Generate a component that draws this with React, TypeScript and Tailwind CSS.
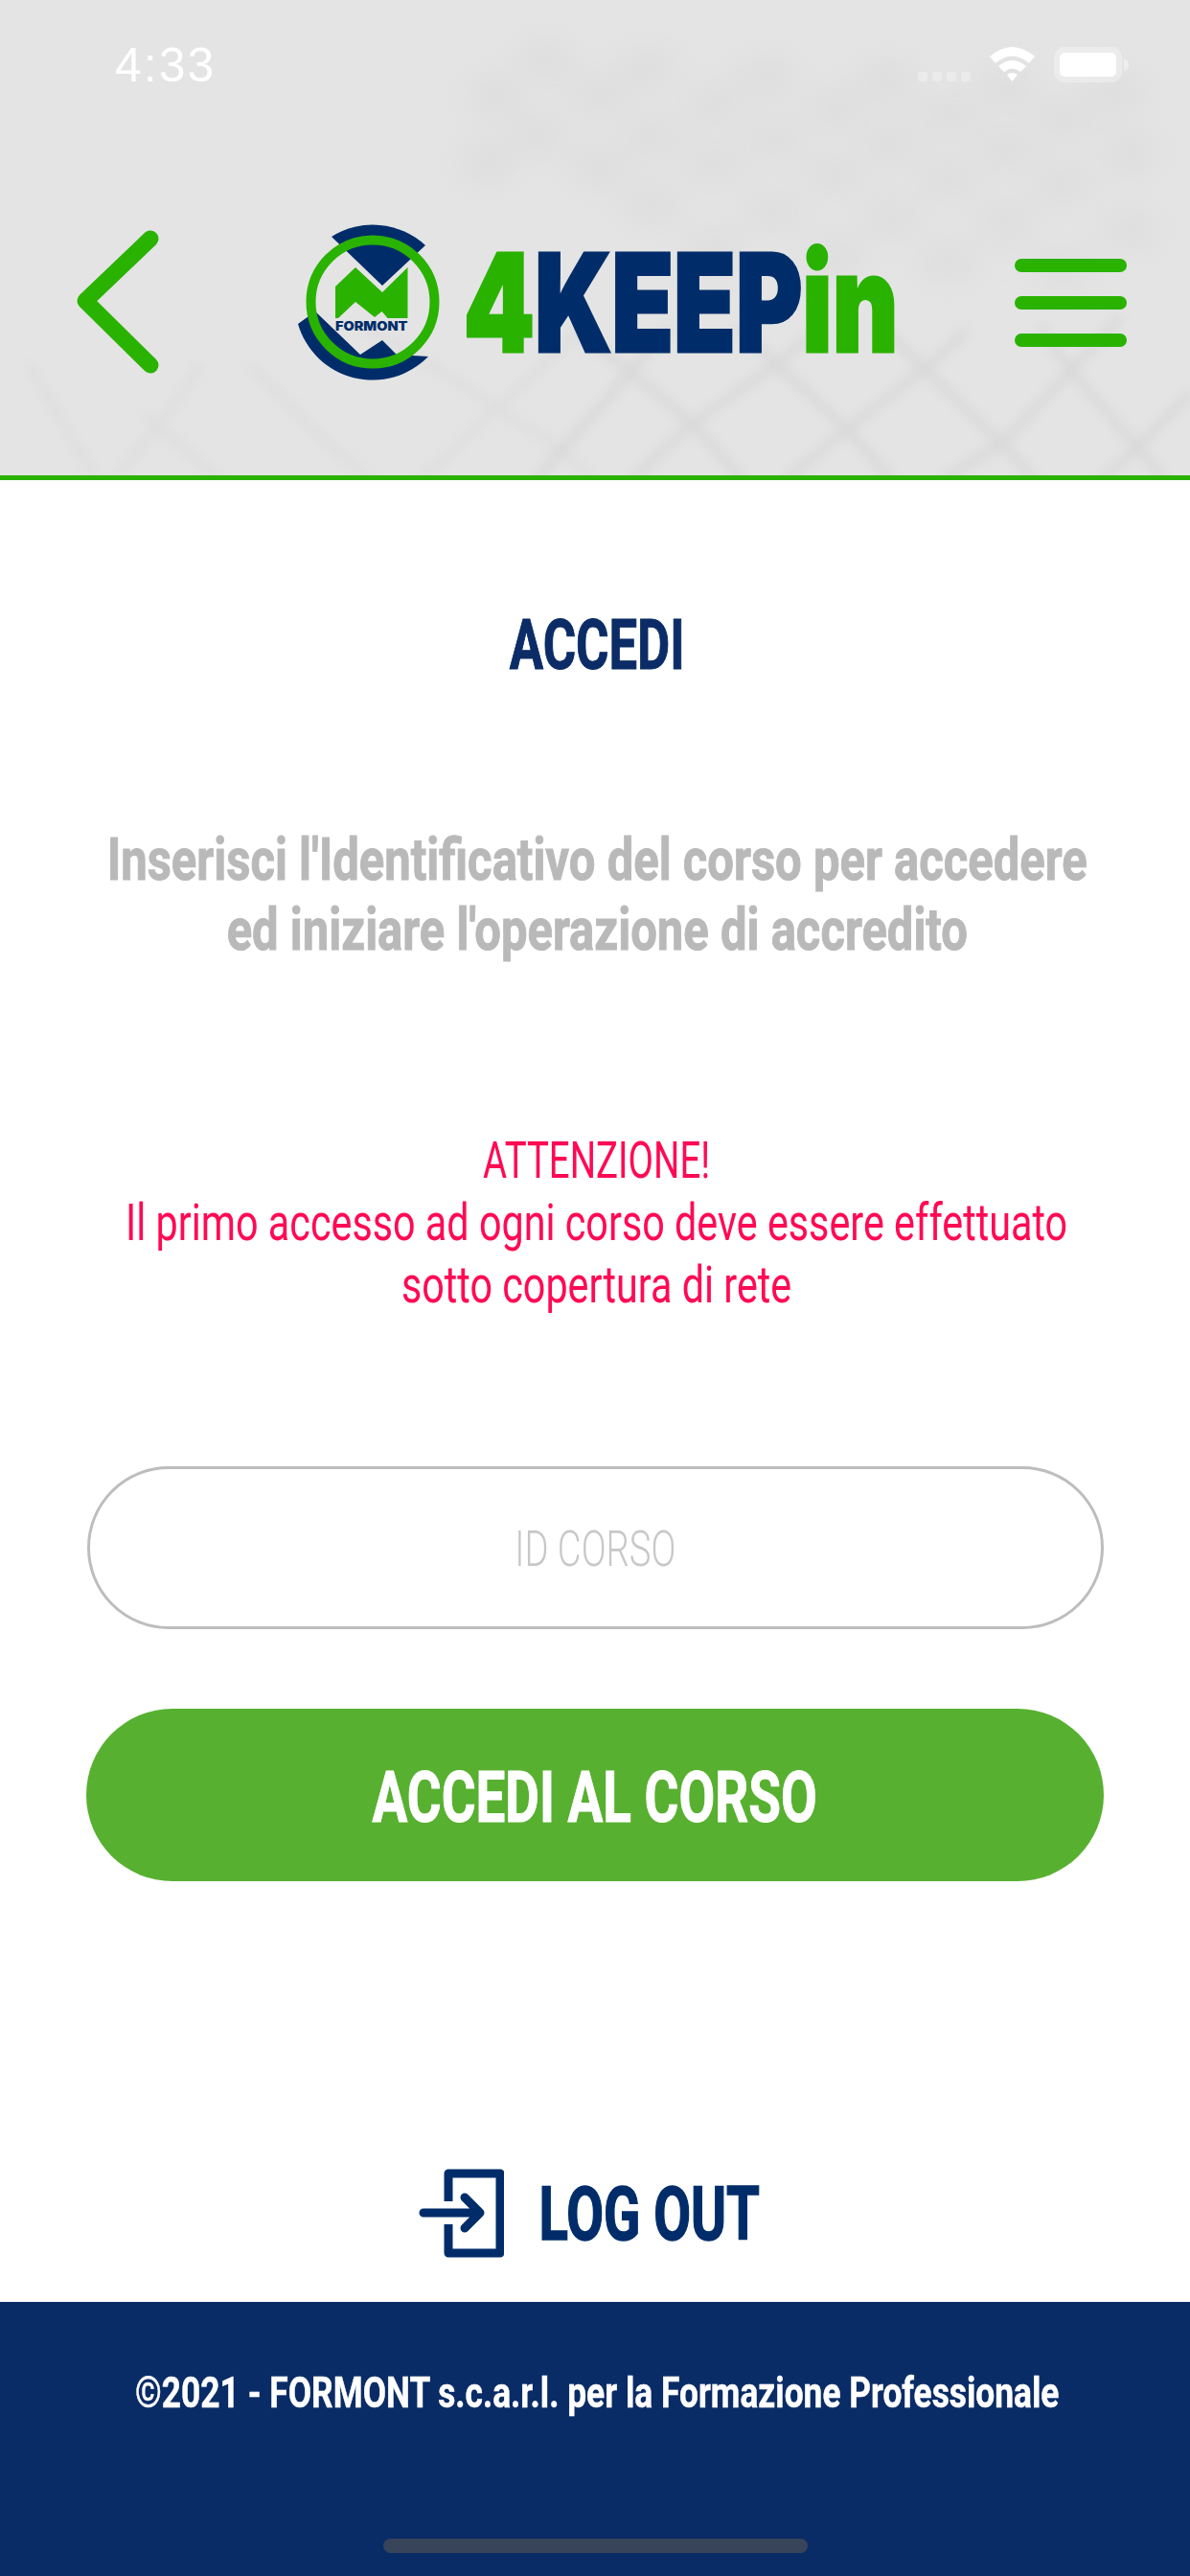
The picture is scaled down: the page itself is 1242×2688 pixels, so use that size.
import React from 'react';

const green = '#2ab200';

// blurred net behind the header, points read off the reference
const netLines = [
  'M600 345 L658 388 L723 442 L775 500',
  'M770 340 L810 380 L884 448 L930 500',
  'M920 340 L965 385 L1045 463 L1080 500',
  'M1085 340 L1118 387 L1187 467 L1215 500',
  'M660 500 L723 442 L810 380 L860 340',
  'M820 500 L884 448 L965 385 L1010 345',
  'M985 500 L1045 463 L1118 387 L1170 330',
  'M1150 500 L1187 467 L1242 410',
  'M560 500 L658 388 L700 340',
];
const faintLines = [
  'M380 340 L472 395 L575 462 L620 500',
  'M260 380 L341 462 L387 500',
  'M440 500 L520 425 L600 350',
  'M30 380 L55 423 L100 500',
  'M210 380 L182 423 L120 500',
  'M150 430 L202 477 L230 500',
];
const blobs = [
  [570, 63], [677, 70], [800, 80], [925, 84], [1050, 92], [1165, 96],
  [515, 100], [626, 100], [745, 110], [871, 113], [990, 120], [1110, 124],
  [562, 140], [681, 143], [808, 146], [930, 150], [1050, 156], [1180, 160],
  [507, 170], [626, 175], [745, 173], [871, 182], [990, 188], [1110, 192],
  [680, 215], [808, 222], [930, 228], [1050, 232], [1180, 240],
  [745, 260], [871, 268], [990, 274], [1110, 280],
];

function HeaderTexture() {
  return (
    <svg className="absolute inset-0 h-full w-full" viewBox="0 0 1242 496" preserveAspectRatio="none">
      <defs>
        <filter id="soft" x="-10%" y="-10%" width="120%" height="120%">
          <feGaussianBlur stdDeviation="6" />
        </filter>
        <filter id="softer" x="-20%" y="-20%" width="140%" height="140%">
          <feGaussianBlur stdDeviation="18" />
        </filter>
      </defs>
      <g filter="url(#softer)" fill="#cfcfcf" opacity="0.4">
        {blobs.map(([cx, cy]) => (
          <ellipse key={`${cx}-${cy}`} cx={cx} cy={cy} rx="30" ry="16" />
        ))}
      </g>
      <g filter="url(#soft)" stroke="#c6c6c6" strokeWidth="8" fill="none" opacity="0.42">
        {netLines.map((d) => (
          <path key={d} d={d} />
        ))}
      </g>
      <g filter="url(#soft)" stroke="#cccccc" strokeWidth="8" fill="none" opacity="0.25">
        {faintLines.map((d) => (
          <path key={d} d={d} />
        ))}
      </g>
    </svg>
  );
}

function BackIcon() {
  return (
    <svg className="h-[150px] w-[86px] shrink-0" viewBox="80 240 86 150" fill="none" stroke={green} strokeWidth="17" strokeLinecap="round" strokeLinejoin="round">
      <path d="M157 249 L89 314 L157 381" />
    </svg>
  );
}

function Emblem() {
  return (
    <svg className="h-[163px] w-[148px] shrink-0" viewBox="311 234 148 163">
      <path d="M346 247 A81 81 0 0 1 444 256 L399 298 Z" fill="#002d69" />
      <path d="M311 338 L329 325 L376 370 L399 355 L414 370 L447 372 A81 81 0 0 1 311 338 Z" fill="#002d69" />
      <path d="M350 299 L371 279 L399 305 L425.500 279 V332 H404.500 L398.600 325 L391 331 L371 315 L353 332 H350 Z" fill={green} />
      <circle cx="389" cy="315" r="64.500" fill="none" stroke={green} strokeWidth="10" />
      <text x="350" y="344.500" textLength="75.500" lengthAdjust="spacingAndGlyphs" fontSize="13" fill="#002d69" className="font-['Inter'] font-black">
        FORMONT
      </text>
    </svg>
  );
}

function LogoutIcon() {
  return (
    <svg className="h-[93px] w-[89px] shrink-0" viewBox="0 0 89 93" fill="none" stroke="#002d69" strokeWidth="9" strokeLinecap="round" strokeLinejoin="round">
      <path d="M31 34 V5 H85 V88 H31 V58" strokeLinecap="butt" />
      <path d="M5 46 H60 M48 30 L64 46 L48 62" />
    </svg>
  );
}

export default function App() {
  return (
    <div className="flex min-h-[2688px] w-[1242px] flex-col overflow-hidden bg-white font-['Roboto',sans-serif]">
      {/* Header */}
      <header className="relative h-[501px] shrink-0 border-b-[5px] border-[#2ab200] bg-[#e4e4e4]">
        <HeaderTexture />
        <div className="relative flex flex-col">
          {/* Status bar */}
          <div className="flex h-[234px] items-start">
            <span className="ml-[120px] mt-[42px] font-['Liberation_Sans',sans-serif] text-[50px] leading-[52px] tracking-[2px] text-white">4:33</span>
            <div className="ml-auto mr-[64px] mt-[49px] flex items-start">
              <div className="mr-[20px] mt-[26px] flex gap-[5px]">
                <span className="size-[10px] rounded-[3px] bg-white/30" />
                <span className="size-[10px] rounded-[3px] bg-white/30" />
                <span className="size-[10px] rounded-[3px] bg-white/30" />
                <span className="size-[10px] rounded-[3px] bg-white/30" />
              </div>
              <svg className="mr-[20px] h-[36px] w-[47px]" viewBox="0 0 47 36" fill="white">
                <path d="M0 10 Q23.500 -10 47 10 L41 17 Q23.500 2 6 17 Z" />
                <path d="M9 20 Q23.500 8 38 20 L32 26 Q23.500 19 15 26 Z" />
                <path d="M18 29 Q23.500 25 29 29 L23.500 36 Z" />
              </svg>
              <div className="flex items-center">
                <div className="h-[37px] w-[71px] rounded-[11px] border-[6px] border-white/30 bg-white bg-clip-padding" />
                <span className="ml-[2px] h-[12px] w-[5px] rounded-r-full bg-white/40" />
              </div>
            </div>
          </div>

          {/* Nav row */}
          <div className="flex h-[163px] items-center">
            <div className="ml-[80px] mt-[-2px]">
              <BackIcon />
            </div>
            <div className="ml-[145px] flex items-center">
              <Emblem />
              <div className="ml-[27px] mt-[-2px] flex w-[448px] justify-center">
                <span className="inline-block origin-center shrink-0 scale-x-[0.745] whitespace-nowrap font-['Inter'] text-[142px] font-black leading-[110px] [-webkit-text-stroke:3px]">
                  <span className="text-[#2ab200]">4</span>
                  <span className="text-[#002d69]">KEEP</span>
                  <span className="text-[#2ab200]">in</span>
                </span>
              </div>
            </div>
            <div className="ml-auto mr-[66px] flex w-[117px] flex-col gap-[25px]">
              <span className="h-[14px] rounded-full bg-[#2ab200]" />
              <span className="h-[14px] rounded-full bg-[#2ab200]" />
              <span className="h-[14px] rounded-full bg-[#2ab200]" />
            </div>
          </div>
        </div>
      </header>

      {/* Content */}
      <main className="flex flex-1 flex-col items-center">
        <h1 className="mt-[143px] flex h-[60px] shrink-0 items-center justify-center">
          <span className="ml-[5px] inline-block scale-x-[0.73] whitespace-nowrap text-[72px] font-bold leading-[60px] text-[#0b2c66] [-webkit-text-stroke:1px]">ACCEDI</span>
        </h1>

        <p className="mt-[156px] flex w-full shrink-0 justify-center">
          <span className="ml-[4px] inline-block shrink-0 scale-x-[0.79] whitespace-nowrap text-center text-[62px] font-bold leading-[73px] text-[#b9b9b9] [-webkit-text-stroke:1px]">
            Inserisci l'Identificativo del corso per accedere
            <br />
            ed iniziare l'operazione di accredito
          </span>
        </p>

        <p className="mt-[172px] flex w-full shrink-0 justify-center">
          <span className="ml-[4px] inline-block shrink-0 scale-x-[0.765] whitespace-nowrap text-center text-[54px] font-normal leading-[65px] text-[#ff0a54]">
            <span className="inline-block scale-x-[0.93]">ATTENZIONE!</span>
            <br />
            Il primo accesso ad ogni corso deve essere effettuato
            <br />
            sotto copertura di rete
          </span>
        </p>

        <div className="mt-[157px] flex h-[170px] w-[1061px] shrink-0 items-center justify-center rounded-full border-[3px] border-[#bdbdbd]">
          <span className="mt-[3px] inline-block scale-x-[0.735] whitespace-nowrap text-[52px] font-light text-[#c8c8c8]">ID CORSO</span>
        </div>

        <button className="mt-[83px] flex h-[180px] w-[1062px] shrink-0 items-center justify-center rounded-full bg-[#58b031]">
          <span className="mt-[5px] inline-block scale-x-[0.74] whitespace-nowrap text-[74px] font-bold text-white [-webkit-text-stroke:1px]">ACCEDI AL CORSO</span>
        </button>

        <button className="mr-[15px] mt-[300px] flex h-[93px] shrink-0 items-center">
          <LogoutIcon />
          <span className="ml-[40px] mt-[4px] flex w-[224px] justify-center">
            <span className="inline-block shrink-0 scale-x-[0.73] whitespace-nowrap text-[77px] font-bold leading-none text-[#002d69] [-webkit-text-stroke:1.5px]">LOG OUT</span>
          </span>
        </button>
      </main>

      {/* Footer */}
      <footer className="flex h-[286px] shrink-0 flex-col items-center bg-[#0a2c66]">
        <div className="mt-[66px] flex w-full justify-center">
          <span className="ml-[4px] inline-block shrink-0 scale-x-[0.785] whitespace-nowrap text-[45px] font-bold leading-[58px] text-white [-webkit-text-stroke:0.5px]">
            ©2021 - FORMONT s.c.a.r.l. per la Formazione Professionale
          </span>
        </div>
        <div className="mt-auto mb-[24px] h-[15px] w-[443px] rounded-full bg-[#38445a]" />
      </footer>
    </div>
  );
}
